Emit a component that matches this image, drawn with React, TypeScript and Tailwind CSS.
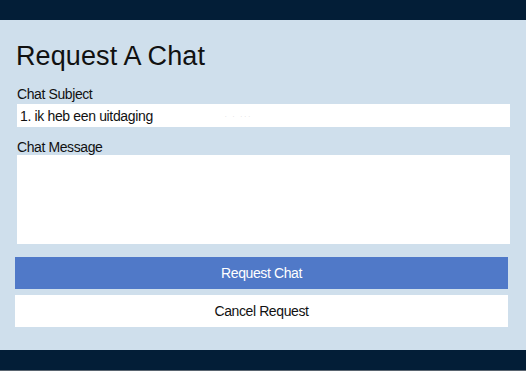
import React from "react";

const App = () => {
  return (
    <div className="flex h-[371px] w-full flex-col font-['Liberation_Sans',Arial,sans-serif]">
      {/* Header bar */}
      <div className="h-[20px] bg-[#031e37]" />

      {/* Form */}
      <div className="flex flex-1 flex-col bg-[#cfdfec] px-[15px] pt-[21px]">
        <h1 className="pl-[1px] text-[27px] leading-[30px] tracking-[0.1px] text-[#111]">Request A Chat</h1>

        <label className="mt-[15px] pl-[2px] text-[14px] leading-[16px] tracking-[-0.4px] text-[#111]">
          Chat Subject
        </label>
        <div className="ml-[2px] mt-[2px] flex h-[23px] w-[493px] items-center bg-white pl-[3px] text-[14px] leading-[16px] tracking-[-0.35px] text-[#111]">
          <span>1. ik heb een uitdaging</span>
          <span className="ml-[72px] text-[6px] tracking-[2px] text-[#c8c8c8]">· · ···</span>
        </div>

        <label className="mt-[12px] pl-[2px] text-[14px] leading-[16px] tracking-[-0.4px] text-[#111]">
          Chat Message
        </label>
        <div className="ml-[2px] h-[89px] w-[493px] bg-white" />

        <button className="mt-[13px] h-[32px] w-[493px] bg-[#5079c8] text-[14px] tracking-[-0.4px] text-white">
          Request Chat
        </button>
        <button className="mt-[6px] h-[32px] w-[493px] bg-white text-[14px] tracking-[-0.4px] text-[#111]">
          Cancel Request
        </button>
      </div>

      {/* Footer bar */}
      <div className="h-[21px] border-b border-[#5a6570] bg-[#031e37]" />
    </div>
  );
};

export default App;
